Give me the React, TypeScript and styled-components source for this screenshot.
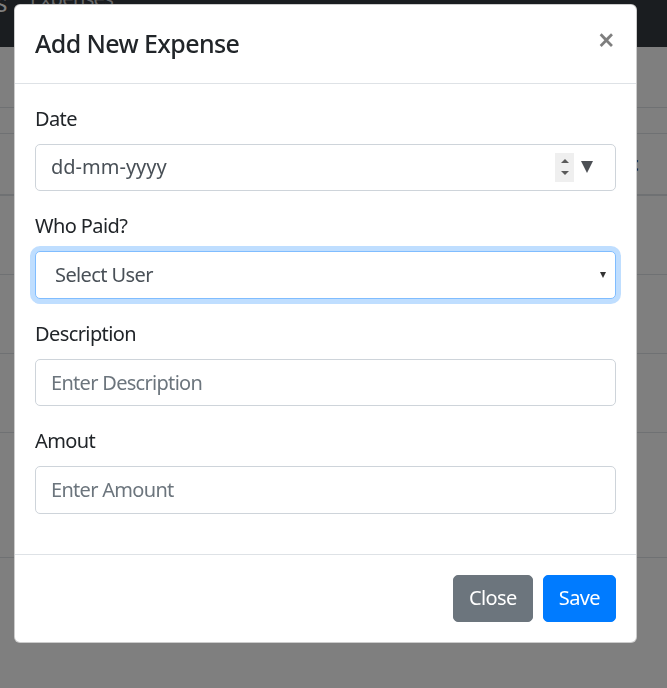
import React from 'react'
import styled, { createGlobalStyle } from 'styled-components'

const GlobalStyle = createGlobalStyle`
  html, body {
    margin: 0;
  }
  body {
    font-family: 'Noto Sans', 'Open Sans', sans-serif;
    font-size: 20px;
    line-height: 1.5;
    letter-spacing: -0.03em;
    color: #212529;
    background: #fff;
    overflow: hidden;
  }
  *, *::before, *::after {
    box-sizing: border-box;
  }
`

// rows behind the modal; their text is covered, only the borders show
const rowHeights = [79, 79, 79, 125]

export default function App() {
  return (
    <>
      <GlobalStyle />
      <Page>
        <Navbar>
          <Brand>Splits</Brand>
          <NavLink>Expenses</NavLink>
        </Navbar>
        <PageHead />
        <Table>
          <HeadRow>
            <Th />
            <Th />
            <Th />
            <Th>Amount</Th>
          </HeadRow>
          {rowHeights.map((h, i) => (
            <Row key={i} $height={h} />
          ))}
        </Table>
      </Page>

      <ModalLayer>
        <Dialog>
          <Header>
            <Title>Add New Expense</Title>
            <CloseX aria-label="Close">×</CloseX>
          </Header>
          <Body>
            <FormGroup>
              <Label>Date</Label>
              <DateBox>
                <DateText>dd-mm-yyyy</DateText>
                <Spinner>
                  <Arrow $dir="up" />
                  <Arrow $dir="down" />
                </Spinner>
                <DropTriangle />
              </DateBox>
            </FormGroup>
            <FormGroup>
              <Label>Who Paid?</Label>
              <SelectWrap>
                <Select defaultValue="">
                  <option value="">Select User</option>
                  <option value="rahul">Rahul</option>
                  <option value="amit">Amit</option>
                  <option value="neha">Neha</option>
                </Select>
                <SelectCaret />
              </SelectWrap>
            </FormGroup>
            <FormGroup>
              <Label>Description</Label>
              <Input placeholder="Enter Description" />
            </FormGroup>
            <FormGroup>
              <Label>Amout</Label>
              <Input placeholder="Enter Amount" />
            </FormGroup>
          </Body>
          <Footer>
            <Button $variant="secondary">Close</Button>
            <Button $variant="primary">Save</Button>
          </Footer>
        </Dialog>
      </ModalLayer>
    </>
  )
}

/* background page */

const Page = styled.div`
  width: 100%;
`

const Navbar = styled.nav`
  height: 47px;
  background-color: #343a40;
  display: flex;
  align-items: flex-start;
  overflow: hidden;
  white-space: nowrap;
`

const Brand = styled.div`
  flex: 0 0 80px;
  margin-left: -73px;
  margin-top: -16px;
  text-align: right;
  font-size: 25px;
  color: #fff;
`

const NavLink = styled.div`
  margin-left: 23px;
  margin-top: -16px;
  color: rgba(255, 255, 255, 0.75);
`

const PageHead = styled.div`
  height: 61px;
  border-bottom: 1px solid #dee2e6;
  margin-bottom: 25px;
`

const Table = styled.div`
  width: 100%;
`

const HeadRow = styled.div`
  display: grid;
  grid-template-columns: repeat(3, 1fr) 121px;
  border-top: 1px solid #dee2e6;
  border-bottom: 2px solid #dee2e6;
  font-weight: 700;
`

const Row = styled.div<{ $height: number }>`
  height: ${(p) => p.$height}px;
  border-bottom: 1px solid #dee2e6;
`

const Th = styled.div`
  padding: 15px;
  min-height: 60px;
`

/* modal */

const ModalLayer = styled.div`
  position: fixed;
  inset: 0;
  background-color: rgba(0, 0, 0, 0.5);
  display: flex;
  align-items: flex-start;
  padding: 4px 30px 0 14px;
`

const Dialog = styled.div`
  width: 623px;
  background-color: #fff;
  border: 1px solid rgba(0, 0, 0, 0.2);
  border-radius: 6px;
  display: flex;
  flex-direction: column;
`

const Header = styled.div`
  display: flex;
  align-items: flex-start;
  justify-content: space-between;
  padding: 20px;
  border-bottom: 1px solid #dee2e6;
`

const Title = styled.h5`
  margin: 0;
  font-size: 25px;
  font-weight: 500;
  line-height: 1.5;
`

const CloseX = styled.button`
  padding: 20px 21px 20px 20px;
  margin: -20px -20px -20px auto;
  background: transparent;
  border: 0;
  font-family: inherit;
  font-size: 30px;
  font-weight: 600;
  line-height: 1;
  color: #000;
  opacity: 0.5;
  text-shadow: 0 1px 0 #fff;
  cursor: pointer;
`

const Body = styled.div`
  padding: 20px;
`

const FormGroup = styled.div`
  margin-bottom: 20px;
`

const Label = styled.label`
  display: block;
  margin-bottom: 10px;
`

const Input = styled.input`
  display: block;
  width: 100%;
  height: 47.5px;
  padding: 7.5px 15px;
  font-family: inherit;
  font-size: 20px;
  line-height: 1.5;
  letter-spacing: -0.035em;
  color: #495057;
  background-color: #fff;
  border: 1px solid #ced4da;
  border-radius: 5px;
  outline: none;
  &::placeholder {
    color: #6c757d;
  }
`

const DateBox = styled.div`
  display: flex;
  align-items: center;
  height: 47.5px;
  padding: 0 22px 0 15px;
  color: #495057;
  border: 1px solid #ced4da;
  border-radius: 5px;
`

const DateText = styled.span`
  flex: 1;
  letter-spacing: 0;
`

const Spinner = styled.div`
  width: 19px;
  height: 29px;
  background-color: #efefef;
  display: flex;
  flex-direction: column;
  align-items: center;
  justify-content: center;
  gap: 8px;
`

const Arrow = styled.span<{ $dir: 'up' | 'down' }>`
  width: 0;
  height: 0;
  border-left: 4px solid transparent;
  border-right: 4px solid transparent;
  ${(p) =>
    p.$dir === 'up' ? 'border-bottom: 4px solid #5a5a5a;' : 'border-top: 4px solid #5a5a5a;'}
`

const DropTriangle = styled.span`
  margin-left: 7px;
  width: 0;
  height: 0;
  border-left: 6.5px solid transparent;
  border-right: 6.5px solid transparent;
  border-top: 12px solid #4d5055;
`

const SelectWrap = styled.div`
  position: relative;
`

const Select = styled.select`
  display: block;
  width: 100%;
  height: 47.5px;
  padding: 7.5px 15px 7.5px 19px;
  font-family: inherit;
  font-size: 20px;
  line-height: 1.5;
  letter-spacing: -0.03em;
  color: #495057;
  background-color: #fff;
  border: 1px solid #80bdff;
  border-radius: 5px;
  box-shadow: 0 0 0 5px rgba(0, 123, 255, 0.25);
  outline: none;
  appearance: none;
`

const SelectCaret = styled.span`
  position: absolute;
  right: 10px;
  top: 21px;
  width: 0;
  height: 0;
  border-left: 3.5px solid transparent;
  border-right: 3.5px solid transparent;
  border-top: 6px solid #333;
  pointer-events: none;
`

const Footer = styled.div`
  display: flex;
  align-items: center;
  justify-content: flex-end;
  padding: 15px;
  border-top: 1px solid #dee2e6;
`

const Button = styled.button<{ $variant: 'primary' | 'secondary' }>`
  margin: 5px;
  padding: 7.5px 15px;
  font-family: inherit;
  font-size: 20px;
  line-height: 1.5;
  letter-spacing: -0.03em;
  color: #fff;
  background-color: ${(p) => (p.$variant === 'primary' ? '#007bff' : '#6c757d')};
  border: 1px solid ${(p) => (p.$variant === 'primary' ? '#007bff' : '#6c757d')};
  border-radius: 5px;
  cursor: pointer;
`
